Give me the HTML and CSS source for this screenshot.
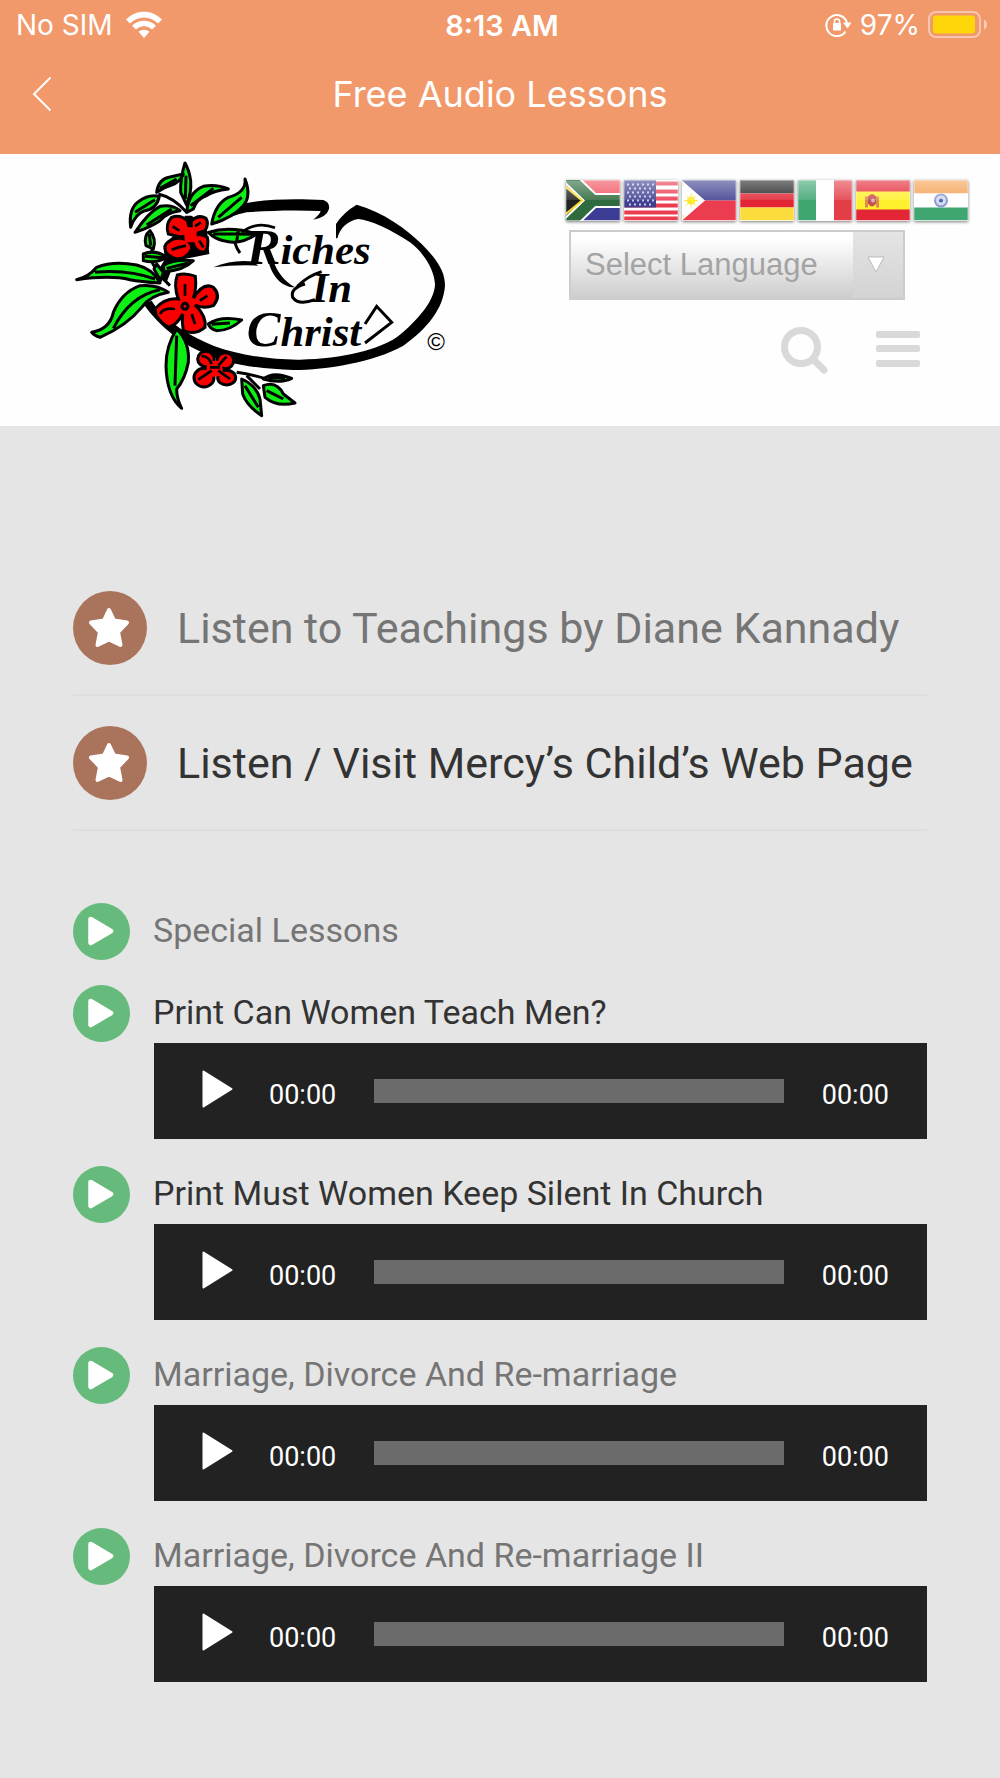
FILE: index.html
```html
<!DOCTYPE html>
<html lang="en">
<head>
  <meta charset="UTF-8" />
  <meta name="viewport" content="width=device-width, initial-scale=1.0"/>
  <title>Free Audio Lessons</title>
  <link rel="stylesheet" href="styles.css">
</head>
<body>

  <header class="app-bar">
    <div class="status">
      <div class="status-left">
        <span>No SIM</span>
        <svg width="38" height="28" viewBox="0 0 38 28" fill="#fff">
          <path d="M1 8.500C11-2 27-2 37 8.500L33 12.500C25.500 4.500 12.500 4.500 5 12.500Z"/>
          <path d="M7 14.700C13.500 8 24.500 8 31 14.700L27 18.500C22.500 14 15.500 14 11 18.500Z"/>
          <path d="M13.500 20.800C16.500 18 21.500 18 24.500 20.800L19 27Z"/>
        </svg>
      </div>
      <div class="status-time">8:13 AM</div>
      <div class="status-right">
        <svg width="27" height="24" viewBox="0 0 27 24">
          <path d="M20.500 18.500A10.500 10.500 0 1 1 22 10" fill="none" stroke="#fff" stroke-width="2"/>
          <path d="M18 9.500h8.500l-4 6z" fill="#fff"/>
          <rect x="8" y="10" width="8" height="7.500" rx="1" fill="#fff"/>
          <path d="M9.500 10.500V8.500a2.500 2.500 0 0 1 5 0v2" fill="none" stroke="#fff" stroke-width="1.500"/>
        </svg>
        <span>97%</span>
        <svg width="60" height="28" viewBox="0 0 60 28">
          <rect x="1" y="1" width="51" height="25" rx="7" fill="none" stroke="#fff" stroke-opacity=".45" stroke-width="2"/>
          <rect x="5" y="4.500" width="42" height="18" rx="3" fill="#ffd60a"/>
          <path d="M56 8.500q3 1.500 3 5t-3 5z" fill="#fff" fill-opacity=".5"/>
        </svg>
      </div>
    </div>
    <div class="title-bar">
      <button class="back" type="button" aria-label="Back">
        <svg width="20" height="36" viewBox="0 0 20 36"><path d="M18.500 1.500L2 18L18.500 34.500" fill="none" stroke="#fff" stroke-width="2"/></svg>
      </button>
      <h1>Free Audio Lessons</h1>
    </div>
  </header>

  <div class="site-header">
    <a class="logo" href="#" aria-label="Riches In Christ">
      <svg viewBox="36 15 1236 816">
        <!-- oval ring -->
        <path d="M460 225Q500 180 560 162C640 148 720 150 790 153Q810 160 807 180Q800 205 760 212Q780 195 782 186C700 182 620 185 560 190Q510 200 470 225Z"/>
        <path d="M828 268V225Q850 190 890 167C970 190 1040 240 1085 285C1135 335 1155 370 1155 410C1150 480 1100 540 1030 590C940 640 800 662 700 663C600 660 500 645 450 620C370 590 300 535 250 465L275 455C315 520 400 565 460 590C540 620 640 633 720 632C850 630 960 600 1010 565C1080 510 1125 450 1125 405C1122 360 1090 310 1050 280C990 240 930 213 895 210C865 215 840 235 832 268Z"/>
        <!-- stems -->
        <g fill="none" stroke="#000" stroke-width="9">
          <path d="M295 135Q340 145 380 190M300 370Q260 340 280 290M300 380L330 410M530 670Q570 675 620 690M560 680L600 720" />
          <path d="M520 245Q520 285 540 312"/>
        </g>
        <path d="M375 200L395 200L440 235L448 315L400 325L345 335L320 400L285 380L315 330L310 290L340 260Z"/>
        <g class="leaf">
          <path d="M375 42Q360 90 362 130L380 168Q395 130 392 95Q388 65 375 42ZM378 80L376 150"/>
          <path d="M290 130Q295 90 330 84L370 75Q360 100 335 108Q310 115 290 130ZM300 118L350 90"/>
          <path d="M212 235Q205 180 235 158Q265 135 298 142Q290 180 255 185Q225 195 212 235ZM225 190L285 152"/>
          <path d="M225 250Q265 190 300 172Q335 165 360 185Q320 190 300 215Q270 235 225 250ZM260 228L335 180"/>
          <path d="M380 190Q385 130 430 112Q470 105 505 120Q460 125 440 140Q410 150 400 180ZM392 170L460 118"/>
          <path d="M455 225Q465 165 505 145Q560 130 555 90Q575 140 550 170Q520 205 455 225ZM475 205L545 145"/>
          <path d="M445 250Q510 230 590 255Q540 290 490 275Q465 270 445 250ZM460 254L580 256M535 240L530 280"/>
          <path d="M270 245Q250 260 258 290L280 300Q290 270 270 245ZM268 255L272 290"/>
          <path d="M250 315Q285 300 320 325Q285 345 250 335ZM255 322L310 326"/>
          <path d="M290 345L310 370L302 395L282 360Z"/>
          <path d="M310 350Q340 330 400 335Q370 365 312 368ZM320 358L385 342"/>
          <path d="M50 392Q85 385 110 355Q160 335 230 348Q280 360 300 402Q240 398 210 392Q150 378 50 392ZM105 370Q200 360 285 390"/>
          <path d="M95 550Q150 540 160 490Q185 430 240 410Q290 405 325 430Q270 440 245 475Q200 530 120 565Q105 562 95 550ZM160 538Q210 440 300 422"/>
          <path d="M350 540Q390 580 385 640Q375 690 350 720Q350 750 365 778Q320 740 318 650Q318 590 350 540ZM350 560L345 710"/>
          <path d="M445 525Q480 500 545 513Q510 545 470 545Q450 540 445 525ZM455 526L510 522"/>
          <path d="M545 690Q590 710 600 750L605 800Q560 770 548 735ZM555 710L595 775"/>
          <path d="M610 690Q640 665 695 688Q660 705 610 690ZM625 686L675 686"/>
          <path d="M610 710Q650 695 670 735L705 762Q650 775 615 745ZM620 725L670 750"/>
        </g>
        <g class="flower">
          <path d="M335 205Q360 195 382 215L390 245Q378 268 355 262L325 255Q315 225 335 205Z"/>
          <path d="M395 215Q415 195 438 208Q448 225 435 245L405 255Q390 240 395 215Z"/>
          <path d="M395 262Q420 250 442 265Q448 290 435 310Q412 310 402 290Z"/>
          <path d="M318 285Q335 265 365 268Q395 275 395 300Q380 330 350 330Q305 315 318 285Z"/>
          <path class="core" d="M370 235H410V280H375Z"/>
          <path class="crease" d="M338 232L358 245M405 232L422 220M335 302Q355 295 378 290M418 275L430 295"/>
          <path d="M352 378Q377 370 406 382Q410 420 400 448Q430 398 460 415Q485 440 460 470Q430 480 405 468Q440 500 435 535Q405 560 370 545Q365 520 368 495Q350 530 325 535Q285 510 285 480Q315 445 355 450Q340 410 352 378Z"/>
          <path class="crease" d="M375 405V440M420 455L442 440M300 495Q310 475 345 480M395 495L405 525"/>
          <circle cx="375" cy="472" r="9"/>
          <ellipse cx="438" cy="630" rx="25" ry="23"/><ellipse cx="496" cy="635" rx="25" ry="24"/>
          <ellipse cx="500" cy="686" rx="27" ry="22"/><ellipse cx="432" cy="686" rx="30" ry="28"/>
          <path class="core" d="M440 635L485 635L490 680L440 685Z"/>
          <path class="crease" d="M425 622Q445 620 455 645M500 622L475 650M415 692L455 665M510 690L475 665M450 655H480"/>
        </g>
        <text class="logo-text" x="560" y="346"><tspan class="cap">R</tspan>iches</text>
        <text class="logo-text" x="755" y="458">In</text>
        <text class="logo-text" x="560" y="590"><tspan class="cap">C</tspan>hrist</text>
        <!-- swashes round the lettering -->
        <path d="M460 355Q520 330 580 338L595 350Q530 346 460 355ZM640 335C650 365 670 395 705 415C665 415 635 380 625 335Z"/>
        <path d="M545 250Q590 215 645 236" fill="none" stroke="#000" stroke-width="8"/>
        <path d="M735 405Q690 418 698 445Q715 470 765 452M712 412Q745 380 785 368" fill="none" stroke="#000" stroke-width="9"/>
        <path d="M915 525L950 472L995 520L915 582" fill="none" stroke="#000" stroke-width="9"/>
        <text class="copy" x="1102" y="604">©</text>
      </svg>
    </a>

    <div class="tools">
      <div class="flags">
        <a href="#" aria-label="Afrikaans"><svg viewBox="0 0 54 40">
          <path fill="#f0505c" d="M0 0h54v14H0z"/><path fill="#3c3c94" d="M0 26h54v14H0z"/>
          <path d="M0-6L27 20L0 46M22 20H54" fill="none" stroke="#fff" stroke-width="15"/>
          <path d="M0-6L27 20L0 46M22 20H54" fill="none" stroke="#2f6b3d" stroke-width="11"/>
          <path d="M-2 5L16 20L-2 35Z" fill="#222" stroke="#f5dc2d" stroke-width="2"/>
        </svg></a>
        <a href="#" aria-label="English"><svg viewBox="0 0 54 40">
          <path fill="#fff" d="M0 0h54v40H0z"/>
          <path stroke="#ec3c50" stroke-width="4" d="M0 3h54M0 11h54M0 18h54M0 25h54M0 32h54M0 38h54"/>
          <path fill="#3f4190" d="M0 0h32v27H0z"/>
          <path stroke="#c8c8e8" stroke-width="2" stroke-dasharray="2 3" d="M3 4h27M5 8h25M3 12h27M5 16h25M3 20h27M5 24h25"/>
        </svg></a>
        <a href="#" aria-label="Filipino"><svg viewBox="0 0 54 40">
          <path fill="#3f4190" d="M0 0h54v20H0z"/><path fill="#ec3c50" d="M0 20h54v20H0z"/>
          <path fill="#fff" d="M0 0L23 20L0 40z"/><circle cx="9" cy="20" r="4" fill="#ffe92e"/>
          <path stroke="#ffe92e" stroke-width="1" d="M2 20h14M9 13v14M4 15l10 10M14 15L4 25M1 3v3M1 34v3"/>
        </svg></a>
        <a href="#" aria-label="German"><svg viewBox="0 0 54 40">
          <path fill="#222" d="M0 0h54v13H0z"/><path fill="#e32636" d="M0 13h54v14H0z"/><path fill="#fbdc3c" d="M0 27h54v13H0z"/>
        </svg></a>
        <a href="#" aria-label="Italian"><svg viewBox="0 0 54 40">
          <path fill="#3fa672" d="M0 0h18v40H0z"/><path fill="#fff" d="M18 0h18v40H18z"/><path fill="#e33e48" d="M36 0h18v40H36z"/>
        </svg></a>
        <a href="#" aria-label="Spanish"><svg viewBox="0 0 54 40">
          <path fill="#e32636" d="M0 0h54v40H0z"/><path fill="#fff02d" d="M0 11h54v18H0z"/>
          <path fill="#e08a50" d="M9 16h3v11H9zM20 16h3v11h-3z"/><path fill="#c8504a" d="M12 16q4-5 8 0v7q-4 6-8 0z"/><circle cx="17" cy="20" r="2" fill="#c9b3d9"/>
        </svg></a>
        <a href="#" aria-label="Hindi"><svg viewBox="0 0 54 40">
          <path fill="#f5a050" d="M0 0h54v13H0z"/><path fill="#fff" d="M0 13h54v14H0z"/><path fill="#3fa672" d="M0 27h54v13H0z"/>
          <circle cx="27" cy="20" r="6" fill="#d5dcf0" stroke="#8a9cd0" stroke-width="2"/><circle cx="27" cy="20" r="2" fill="#4a66b0"/>
        </svg></a>
      </div>
      <div class="language">
        <select aria-label="Select Language">
          <option>Select Language</option>
          <option>Afrikaans</option>
          <option>German</option>
          <option>Italian</option>
          <option>Spanish</option>
        </select>
        <svg class="arrow" width="18" height="17" viewBox="0 0 18 17"><path d="M1 1H17L9 16Z" fill="#fff" stroke="#bbb" stroke-width="1"/></svg>
      </div>
      <div class="menu">
        <button type="button" aria-label="Search">
          <svg width="47" height="48" viewBox="0 0 47 48" fill="none" stroke="#d9d9d9" stroke-width="7">
            <circle cx="20" cy="20" r="16.500"/><path d="M32 32L43 43" stroke-linecap="round"/>
          </svg>
        </button>
        <button type="button" aria-label="Menu">
          <svg width="44" height="48" viewBox="0 0 44 48" fill="#d9d9d9">
            <rect y="4" width="44" height="7" rx="2"/><rect y="18" width="44" height="7" rx="2"/><rect y="33" width="44" height="7" rx="2"/>
          </svg>
        </button>
      </div>
    </div>
  </div>

  <!-- shared icons -->
  <svg class="symbols" width="0" height="0">
    <symbol id="star" viewBox="0 0 74 74">
      <path d="M36 19L41 29.500L54 31.500L45 41L47.500 54L36 48.500L24.500 54L27 41L18 31.500L31 29.500Z" fill="#fff" stroke="#fff" stroke-width="4" stroke-linejoin="round"/>
    </symbol>
    <symbol id="round-play" viewBox="0 0 58 58">
      <path d="M18 16.500L38.500 28.500L18 40.500Z" fill="#fff" stroke="#fff" stroke-width="5" stroke-linejoin="round"/>
    </symbol>
    <symbol id="play" viewBox="0 0 31 38">
      <path d="M1.500 1.500L29.500 19L1.500 36.500Z" fill="#fff" stroke="#fff" stroke-width="2" stroke-linejoin="round"/>
    </symbol>
  </svg>

  <main>
    <ul class="links">
      <li><svg class="star"><use href="#star"/></svg><a class="muted" href="#">Listen to Teachings by Diane Kannady</a></li>
      <li><svg class="star"><use href="#star"/></svg><a href="#">Listen / Visit Mercy’s Child’s Web Page</a></li>
    </ul>

    <ul class="lessons">
      <li>
        <div class="lesson"><svg class="bullet"><use href="#round-play"/></svg><span class="muted">Special Lessons</span></div>
      </li>
      <li>
        <div class="lesson"><svg class="bullet"><use href="#round-play"/></svg><a href="#">Print Can Women Teach Men?</a></div>
        <div class="player">
          <button type="button" aria-label="Play"><svg width="31" height="38"><use href="#play"/></svg></button>
          <span class="time">00:00</span>
          <input type="range" min="0" max="100" value="0" aria-label="Position">
          <span class="time">00:00</span>
        </div>
      </li>
      <li>
        <div class="lesson"><svg class="bullet"><use href="#round-play"/></svg><a href="#">Print Must Women Keep Silent In Church</a></div>
        <div class="player">
          <button type="button" aria-label="Play"><svg width="31" height="38"><use href="#play"/></svg></button>
          <span class="time">00:00</span>
          <input type="range" min="0" max="100" value="0" aria-label="Position">
          <span class="time">00:00</span>
        </div>
      </li>
      <li>
        <div class="lesson"><svg class="bullet"><use href="#round-play"/></svg><span class="muted">Marriage, Divorce And Re-marriage</span></div>
        <div class="player">
          <button type="button" aria-label="Play"><svg width="31" height="38"><use href="#play"/></svg></button>
          <span class="time">00:00</span>
          <input type="range" min="0" max="100" value="0" aria-label="Position">
          <span class="time">00:00</span>
        </div>
      </li>
      <li>
        <div class="lesson"><svg class="bullet"><use href="#round-play"/></svg><span class="muted">Marriage, Divorce And Re-marriage II</span></div>
        <div class="player">
          <button type="button" aria-label="Play"><svg width="31" height="38"><use href="#play"/></svg></button>
          <span class="time">00:00</span>
          <input type="range" min="0" max="100" value="0" aria-label="Position">
          <span class="time">00:00</span>
        </div>
      </li>
    </ul>
  </main>

</body>
</html>
```
FILE: styles.css
```css
* {
  box-sizing: border-box;
}

body {
  margin: 0;
  background: #e5e5e5;
  color: #333;
  font-family: Roboto, sans-serif;
}

a {
  color: inherit;
  text-decoration: none;
}

button {
  padding: 0;
  border: 0;
  background: none;
}

svg {
  display: block;
}

ul {
  margin: 0;
  padding: 0;
  list-style: none;
}

.symbols {
  position: absolute;
}

/* top bar */
.app-bar {
  background: #f1996a;
  color: #fff;
  font-family: Inter, sans-serif;
  padding-bottom: 16px;
}

.status {
  display: grid;
  grid-template-columns: 1fr auto 1fr;
  align-items: center;
  height: 50px;
  padding: 0 12px 0 16px;
  font-size: 28px;
}

.status-left {
  display: flex;
  align-items: center;
  gap: 12px;
}

.status-time {
  font-size: 29px;
  font-weight: 600;
}

.status-right {
  display: flex;
  align-items: center;
  justify-content: flex-end;
  gap: 8px;
}

.title-bar {
  display: grid;
  grid-template-columns: 64px 1fr 64px;
  align-items: center;
  height: 88px;
}

.back {
  padding-left: 32px;
}

.title-bar h1 {
  margin: 0;
  text-align: center;
  font-size: 36px;
  font-weight: 400;
  line-height: 40px;
}

/* logo, flags and menu */
.site-header {
  display: flex;
  justify-content: space-between;
  background: #fefefe;
  padding: 0 32px 0 72px;
}

.logo svg {
  width: 412px;
  height: 272px;
}

.leaf path {
  fill: #0cee14;
  stroke: #000;
  stroke-width: 9px;
  stroke-linejoin: round;
}

.flower {
  fill: #f80000;
  stroke: #000;
  stroke-width: 9px;
}

.flower .core {
  stroke: none;
}

.flower .crease {
  fill: none;
  stroke-width: 8px;
}

.logo-text {
  font-family: "Liberation Serif", serif;
  font-size: 128px;
  font-style: italic;
  font-weight: bold;
}

.logo-text .cap {
  font-size: 152px;
}

.copy {
  font-family: "Liberation Sans", sans-serif;
  font-size: 72px;
}

.tools {
  padding-top: 26px;
}

.flags {
  display: flex;
  gap: 4px;
}

.flags a {
  position: relative;
  width: 54px;
  height: 41px;
  box-shadow: 0 1px 3px rgba(0, 0, 0, .5);
}

/* glossy top half */
.flags a::after {
  content: "";
  position: absolute;
  inset: 0;
  background: linear-gradient(rgba(255, 255, 255, .4), rgba(255, 255, 255, .1) 50%, transparent 50%);
  border: 1px solid rgba(255, 255, 255, .25);
}

.flags svg {
  width: 100%;
  height: 100%;
}

.language {
  position: relative;
  width: 336px;
  margin: 9px 0 0 3px;
}

.language select {
  appearance: none;
  display: block;
  width: 100%;
  height: 70px;
  padding: 0 60px 2px 14px;
  border: 2px solid #ccc;
  border-radius: 0;
  background: linear-gradient(#e4e4e4, #d3d3d3) right / 50px 100% no-repeat, linear-gradient(#fff 10%, #cdcdcd);
  color: #a3a3a3;
  font-family: "Liberation Sans", sans-serif;
  font-size: 31px;
}

.arrow {
  position: absolute;
  top: 26px;
  right: 20px;
  pointer-events: none;
}

.menu {
  display: flex;
  justify-content: flex-end;
  gap: 48px;
  padding: 27px 48px 0 0;
}

/* page content */
main {
  padding: 165px 73px 96px;
}

.muted {
  color: #757575;
}

.links li {
  display: flex;
  align-items: center;
  gap: 30px;
  padding-bottom: 29px;
  margin-bottom: 30px;
  border-bottom: 2px solid #dedede;
  font-size: 43px;
  line-height: 72px;
  white-space: nowrap;
}

.star {
  flex: none;
  width: 74px;
  height: 74px;
  border-radius: 50%;
  background: #aa745c;
}

.lessons {
  padding-top: 42px;
}

.lessons li {
  margin-bottom: 27px;
}

.lessons li:first-child {
  margin-bottom: 24px;
}

.lesson {
  display: flex;
  gap: 23px;
  height: 58px;
  font-size: 34px;
  line-height: 54px;
}

.bullet {
  flex: none;
  width: 57px;
  height: 57px;
  border-radius: 50%;
  background: #66bb7c;
}

.player {
  display: flex;
  align-items: center;
  height: 96px;
  margin-left: 81px;
  padding: 0 38px 0 48px;
  background: #222;
  color: #fff;
}

.player button {
  padding-bottom: 5px;
}

.time {
  padding-top: 7px;
  font-size: 27px;
}

.player button + .time {
  padding-left: 36px;
}

.player input {
  appearance: none;
  flex: 1;
  min-width: 0;
  height: 24px;
  margin: 0 38px;
  background: #6b6b6b;
}

.player input::-webkit-slider-thumb {
  appearance: none;
  width: 0;
  height: 24px;
}
```
